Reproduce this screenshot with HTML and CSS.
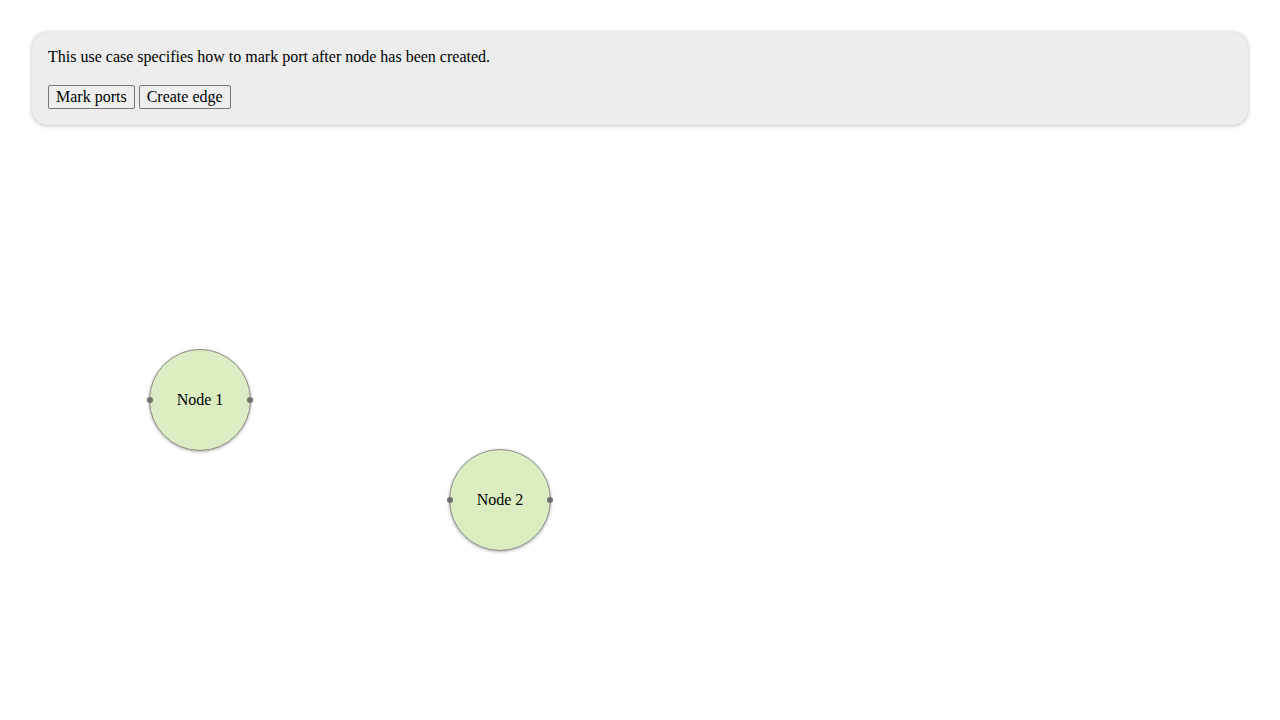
FILE: index.html
```html
<!DOCTYPE html>
<html>
<head>
<meta charset="utf-8">
<link rel="stylesheet" href="styles.css">
</head>
<body>
<div class="panel">
  <p class="desc">This use case specifies how to mark port after node has been created.</p>
  <div class="actions">
    <button class="btn">Mark ports</button>
    <button class="btn">Create edge</button>
  </div>
</div>
<div class="canvas">
  <div class="node n1"><span>Node 1</span><i class="port left"></i><i class="port right"></i></div>
  <div class="node n2"><span>Node 2</span><i class="port left"></i><i class="port right"></i></div>
</div>
</body>
</html>
```
FILE: styles.css
```css
html, body { margin: 0; padding: 0; background: #fff; }
body { font-family: "Liberation Serif", serif; font-size: 16px; color: #000; width: 1280px; height: 720px; position: relative; overflow: hidden; }
.panel {
  margin: 32px 32px 0 32px;
  padding: 16px;
  background: #ededed;
  border-radius: 15px;
  box-shadow: 0 0 1px rgba(0,0,0,0.2), 0 1px 5px rgba(0,0,0,0.2);
}
.desc { margin: 0 0 19px 0; line-height: 18px; }
.actions { display: flex; gap: 4px; }
.btn {
  font-family: "Liberation Serif", serif;
  font-size: 16px;
  line-height: 18px;
  padding: 2px 7px;
  background: #efefef;
  border: 1px solid #767676;
  border-radius: 2px;
  color: #000;
}
.canvas { position: absolute; left: 0; top: 0; width: 1280px; height: 720px; pointer-events: none; }
.node {
  position: absolute;
  width: 100px; height: 100px;
  border-radius: 50%;
  background: #dcedc1;
  border: 1px solid #8c8c8c;
  box-shadow: 0 1px 3px rgba(0,0,0,0.3);
  display: flex; align-items: center; justify-content: center;
}
.n1 { left: 149px; top: 349px; }
.n2 { left: 449px; top: 449px; }
.port { position: absolute; top: 50%; width: 6px; height: 6px; margin-top: -3px; border-radius: 50%; background: #707070; }
.port.left { left: -3px; }
.port.right { right: -3px; }
```
